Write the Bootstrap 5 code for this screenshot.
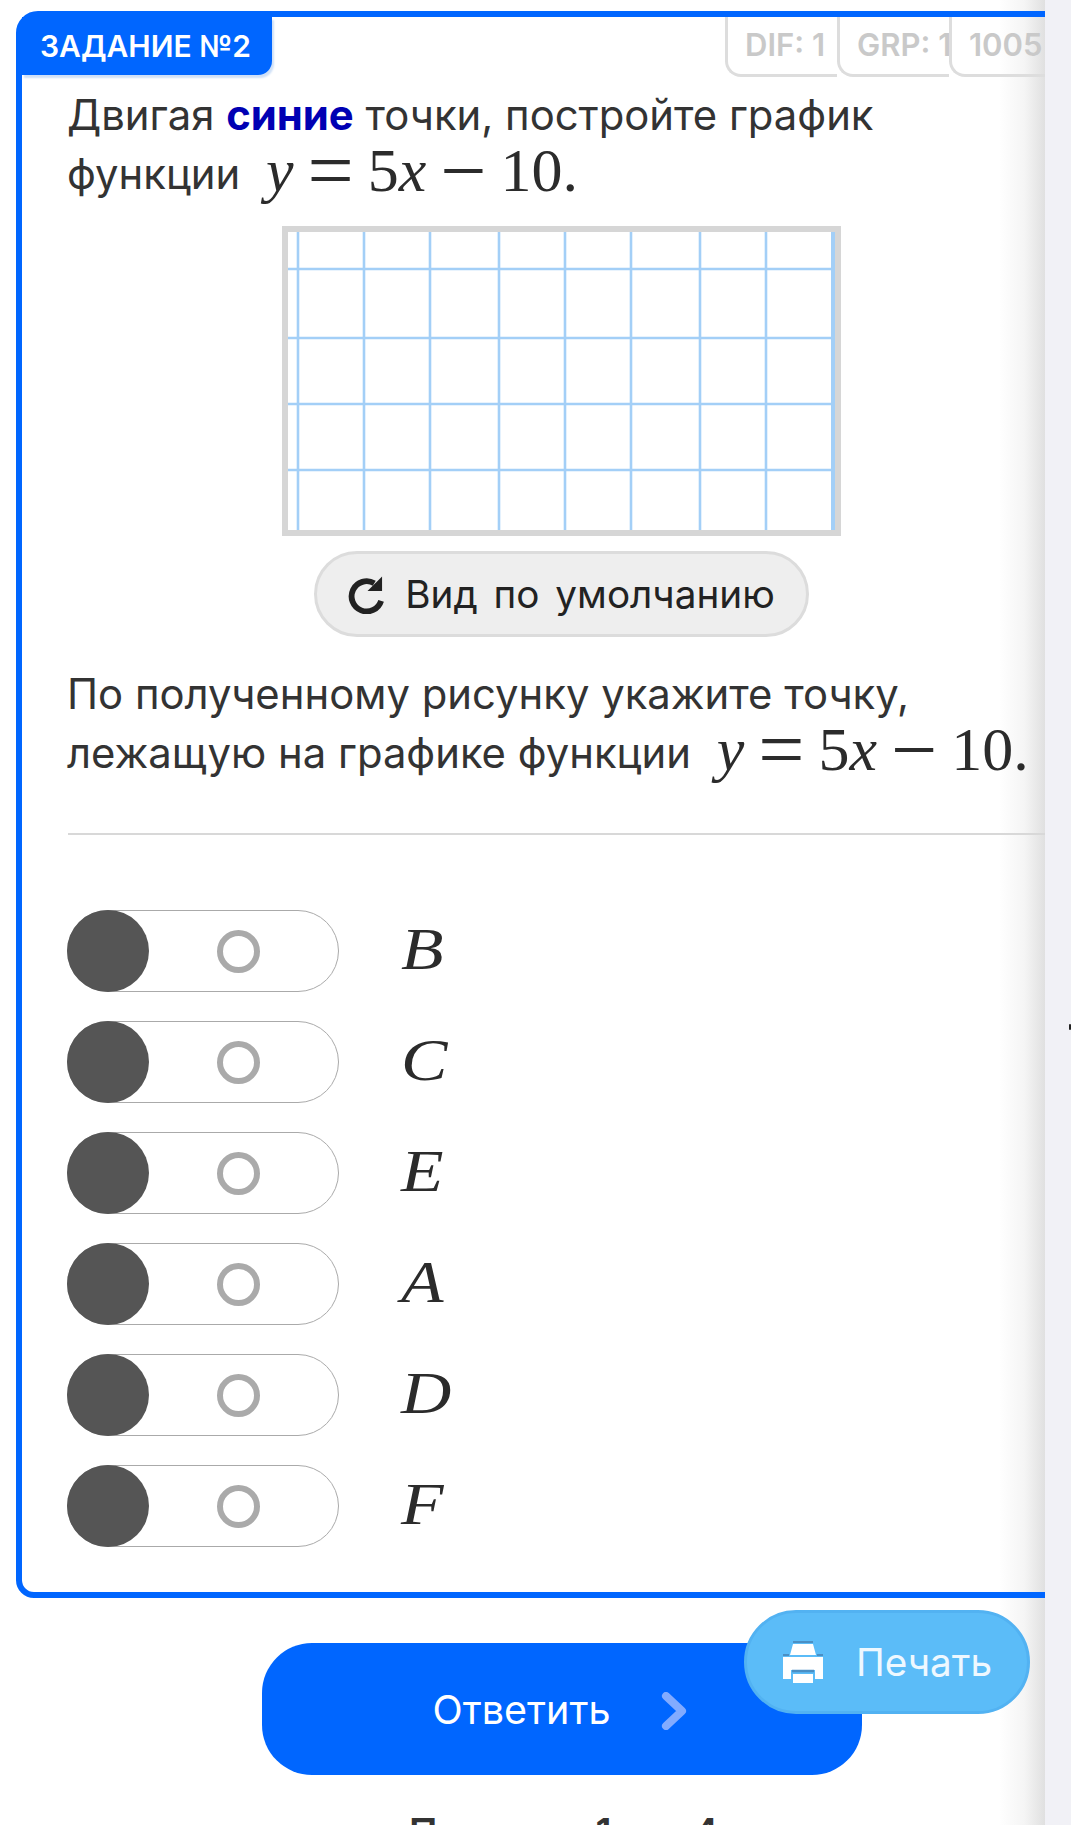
<!doctype html>
<html lang="ru">
<head>
<meta charset="utf-8">
<title>Задание №2</title>
<link href="https://cdn.jsdelivr.net/npm/bootstrap@5.3.0/dist/css/bootstrap.min.css" rel="stylesheet">
<style>
html,body{height:1825px;overflow:hidden;background:#fff}
body{font-family:Inter,"Noto Sans",sans-serif;color:#2b2b2b}
.shell{height:1825px}
.stage{width:1045px;flex:none;overflow:hidden;padding:11px 0 0 16px;
  background:linear-gradient(to right,rgba(224,224,224,0) 0,rgba(238,238,238,.6) 55%,#e0e0e0 100%) right top/46px 100% no-repeat}
.rail{width:26px;flex:none;background:#f1f1f6;padding-top:1024px}
.rail-mark{width:2px;height:6px;background:#222;margin-left:24px;border-radius:1px}
.task{width:1100px;border:6px solid #0066ff;border-radius:22px 0 0 18px;padding-bottom:45px}
.task-head{height:58px}
.task-tab{width:250px;height:58px;background:#0066ff;color:#fff;font-weight:600;font-size:30px;padding-left:18px;border-radius:0 0 14px 0;box-shadow:2px 3px 2px #cfe0f7}
.meta-tabs{margin-left:453px}
.meta-tab{width:112px;height:60px;flex:none;border-left:3px solid #ddd;border-bottom:3px solid #ddd;border-radius:0 0 0 16px;color:#c9c9c9;font-weight:600;font-size:31px;padding-left:17px;white-space:nowrap}
.prose{padding-left:45px;font-size:41.8px;line-height:59px;color:#333}
.prose p{margin:0}
.first-p{padding-top:11px}
.strong-blue{color:#0000b3;font-weight:700}
.math{font-family:"Liberation Serif",serif;font-size:62px;line-height:0;color:#2b2b2b;margin-left:14px;white-space:nowrap;vertical-align:-2px}
.math i{font-style:italic;line-height:0}
.op{font-size:82px;line-height:0;margin:0 14px;vertical-align:-7px}
.board-wrap{margin-top:22px;padding-left:260px}
.board{display:block;width:559px;height:310px;border:6px solid #d6d6d6;background:#fff;box-sizing:border-box}
.reset-btn{margin:15px 0 28px 292px;width:495px;height:86px;border:3px solid #dcdcdc;border-radius:43px;background:#eee;color:#222;font-size:38.7px;gap:20px;word-spacing:5px;padding:0}
.rule{margin:50px 0 0 46px;border:0;border-top:2px solid #d8d8d8;opacity:1}
.opts{padding:75px 0 0 45px;gap:29px}
.pill{width:272px;height:82px;border:1.5px solid #aaa;border-radius:41px;flex:none}
.knob{width:82px;height:82px;border-radius:50%;background:#555;margin-left:-1px;flex:none}
.ring{width:43px;height:43px;border:6px solid #aaa;border-radius:50%;margin-left:68px;flex:none}
.opt-letter{font-family:"Liberation Serif",serif;font-style:italic;font-size:60px;line-height:1;margin-left:62px;padding-bottom:5px;color:#2b2b2b;transform:scaleX(1.16);transform-origin:left center}
.actions{margin-top:45px;width:1029px}
.answer-btn{width:600px;height:132px;margin-left:246px;border:0;border-radius:50px;background:#0066ff;color:#fff;font-size:39.5px;padding:3px 5px 0 0;gap:50px}
.answer-btn:hover{background:#0066ff;color:#fff}
.print-btn{position:absolute;left:728px;top:-33px;width:286px;height:104px;background:#5bbcf8;border:3px solid #52b2f2;border-radius:52px;color:#eef8ff;font-size:38.7px;gap:33px;padding:0 0 0 36px;justify-content:flex-start}
.print-btn:hover{background:#5bbcf8;color:#eef8ff}
.cut-line{margin:38px 0 0 393px;font-size:38px;font-weight:600;line-height:1;white-space:nowrap;word-spacing:10px;color:#333}
</style>
</head>
<body>
<div class="shell d-flex">
  <main class="stage">
    <section class="task">
      <div class="task-head d-flex">
        <div class="task-tab d-flex align-items-center">ЗАДАНИЕ №2</div>
        <div class="meta-tabs d-flex">
          <div class="meta-tab d-flex align-items-center">DIF: 1</div>
          <div class="meta-tab d-flex align-items-center">GRP: 1</div>
          <div class="meta-tab d-flex align-items-center">1005</div>
        </div>
      </div>
      <div class="prose first-p">
        <p>Двигая <span class="strong-blue">синие</span> точки, постройте график<br>функции <span class="math"><i>y</i><span class="op">=</span>5<i>x</i><span class="op">−</span>10.</span></p>
      </div>
      <div class="board-wrap">
        <svg class="board" viewBox="0 0 547 298" aria-label="Координатная сетка">
          <g stroke="#a3cff7" stroke-width="2.6" fill="none">
            <path d="M10 0V298M76 0V298M142 0V298M211 0V298M277 0V298M343 0V298M412 0V298M478 0V298"/>
            <path d="M545 0V298" stroke-width="4"/>
            <path d="M0 37H543M0 106H543M0 172H543M0 238H543"/>
          </g>
        </svg>
      </div>
      <button class="btn reset-btn d-flex align-items-center justify-content-center" type="button">
        <svg width="37" height="40" viewBox="0 0 38 40" aria-hidden="true"><path d="M34 27A15.5 15.5 0 1 1 27 9" fill="none" stroke="#222" stroke-width="6"/><path d="M35 2V17H20Z" fill="#222"/></svg>
        <span>Вид по умолчанию</span>
      </button>
      <div class="prose">
        <p>По полученному рисунку укажите точку,<br>лежащую на графике функции <span class="math"><i>y</i><span class="op">=</span>5<i>x</i><span class="op">−</span>10.</span></p>
      </div>
      <hr class="rule">
      <div class="opts d-flex flex-column">
        <div class="d-flex align-items-center"><div class="pill d-flex align-items-center"><div class="knob"></div><div class="ring"></div></div><div class="opt-letter">B</div></div>
        <div class="d-flex align-items-center"><div class="pill d-flex align-items-center"><div class="knob"></div><div class="ring"></div></div><div class="opt-letter">C</div></div>
        <div class="d-flex align-items-center"><div class="pill d-flex align-items-center"><div class="knob"></div><div class="ring"></div></div><div class="opt-letter">E</div></div>
        <div class="d-flex align-items-center"><div class="pill d-flex align-items-center"><div class="knob"></div><div class="ring"></div></div><div class="opt-letter">A</div></div>
        <div class="d-flex align-items-center"><div class="pill d-flex align-items-center"><div class="knob"></div><div class="ring"></div></div><div class="opt-letter">D</div></div>
        <div class="d-flex align-items-center"><div class="pill d-flex align-items-center"><div class="knob"></div><div class="ring"></div></div><div class="opt-letter">F</div></div>
      </div>
    </section>
    <div class="actions position-relative">
      <button class="btn answer-btn d-flex align-items-center justify-content-center" type="button">
        <span>Ответить</span>
        <svg width="26" height="38" viewBox="0 0 26 38" aria-hidden="true"><path d="M5 4L21 19L5 34" fill="none" stroke="#82abff" stroke-width="8" stroke-linecap="round" stroke-linejoin="round"/></svg>
      </button>
      <button class="btn print-btn d-flex align-items-center" type="button">
        <svg width="40" height="42" viewBox="0 0 40 42" aria-hidden="true">
          <path d="M10 1H30" stroke="#4a8fc4" stroke-width="2"/>
          <path d="M10 3H30L33 14H7Z" fill="#fff"/>
          <path d="M0 14H6M34 14H40" stroke="#4a8fc4" stroke-width="2"/>
          <path d="M0 16H40V38H32V29H8V38H0Z" fill="#fff"/>
          <path d="M9 30H31" stroke="#4a8fc4" stroke-width="2.5"/>
          <path d="M10 33H30V42H10Z" fill="#fff"/>
        </svg>
        <span>Печать</span>
      </button>
      <div class="cut-line">Попытка 1 из 4</div>
    </div>
  </main>
  <aside class="rail"><div class="rail-mark"></div></aside>
</div>
</body>
</html>
